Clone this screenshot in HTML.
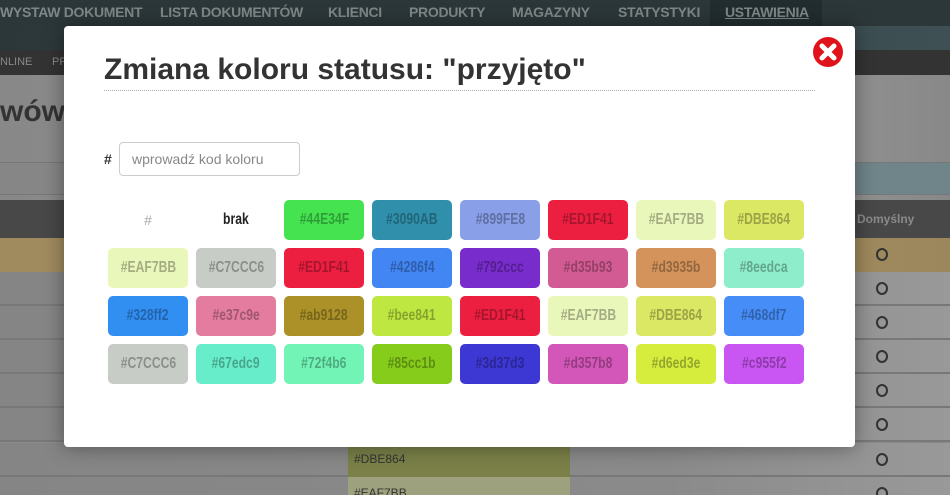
<!DOCTYPE html>
<html style="width:950px;height:495px;overflow:hidden"><head><meta charset="utf-8"><style>
*{margin:0;padding:0;box-sizing:border-box}
body{width:950px;height:495px;overflow:hidden;position:relative;background:#8a8a8a;font-family:"Liberation Sans",sans-serif}
.nav{position:absolute;left:0;top:0;width:950px;height:26px;background:#2c3739;color:#7f8889;font-weight:bold;font-size:14px;letter-spacing:-0.3px}
.nav span{position:absolute;top:4px}
.hdr{position:absolute;left:0;top:26px;width:950px;height:24px;background:linear-gradient(90deg,#2b3739,#3e5054)}
.sub{position:absolute;left:0;top:50px;width:950px;height:25px;background:#333;color:#888;font-size:11px}
.pg{position:absolute;left:0;top:75px;width:950px;height:125px;background:linear-gradient(90deg,#888,#979797 80%,#888)}
.filt{position:absolute;left:0;top:162px;width:950px;height:33px;background:#868686;border-top:1px solid #777;border-bottom:1px solid #777}
.th{position:absolute;left:0;top:200px;width:950px;height:38px;background:#484848;color:#8a8a8a;font-size:12px;font-weight:bold}
.tan{position:absolute;left:0;top:238px;width:950px;height:34px;background:linear-gradient(90deg,#a08b5f,#a48f62 70%,#9c875c)}
.row{position:absolute;left:0;width:950px;height:34px;background:linear-gradient(90deg,#858585,#8a8a8a 70%,#999);border-bottom:2px solid #787878}
.modal{position:absolute;left:64px;top:26px;width:791px;height:421px;background:#fff;border-radius:4px;box-shadow:0 0 20px rgba(0,0,0,.4)}
h1{position:absolute;left:40px;top:27px;font-size:30px;font-weight:bold;color:#333;white-space:nowrap}
.dl{position:absolute;left:40px;top:64px;width:711px;border-top:1px dotted #aaa}
.hash{position:absolute;left:40px;top:125px;font-weight:bold;font-size:14px;color:#333}
.inp{position:absolute;left:55px;top:116px;width:181px;height:34px;border:1px solid #ccc;border-radius:4px;font-size:14px;color:#888;padding:8px 12px}
.sw{position:absolute;width:80px;height:40px;border-radius:5px;color:rgba(0,0,0,.3);text-align:center;line-height:40px;overflow:hidden}
.sw b{display:inline-block;font-size:16px;transform:scaleX(.76);white-space:nowrap}
.x{position:absolute;left:749px;top:11px;width:30px;height:30px}
.c{position:absolute;left:876px;top:10px;width:12px;height:13px;border:2px solid #333;border-radius:50%}
</style></head><body>
<div class="nav"><span style="left:0">WYSTAW DOKUMENT</span><span style="left:160px">LISTA DOKUMENTÓW</span><span style="left:328px">KLIENCI</span><span style="left:409px">PRODUKTY</span><span style="left:512px">MAGAZYNY</span><span style="left:618px">STATYSTYKI</span><span style="left:710px;background:#222d2f;height:26px;top:0;padding:4px 15px 0;width:112px;text-decoration:underline">USTAWIENIA</span></div>
<div class="hdr"></div>
<div class="sub"><span style="position:absolute;left:0;top:6px">NLINE</span><span style="position:absolute;left:52px;top:6px">PR</span></div>
<div class="pg"><span style="position:absolute;left:0;top:20px;font-size:30px;font-weight:bold;color:#333">wów</span></div>
<div class="filt" style="background:#708589"></div>
<div class="filt" style="width:70px"></div>
<div class="th"><span style="position:absolute;left:857px;top:12px">Domyślny</span></div>
<div class="tan"><span class="c"></span></div>
<div class="row" style="top:272px"><span class="c"></span></div><div class="row" style="top:306px"><span class="c"></span></div><div class="row" style="top:340px"><span class="c"></span></div><div class="row" style="top:374px"><span class="c"></span></div><div class="row" style="top:408px"><span class="c"></span></div>
<div class="row" style="top:443px"><div style="position:absolute;left:348px;top:0;width:222px;height:34px;background:#7b8048;color:#333;font-size:12px;padding:9px 6px">#DBE864</div><span class="c"></span></div>
<div class="row" style="top:477px"><div style="position:absolute;left:348px;top:0;width:222px;height:34px;background:#9ea17e;color:#333;font-size:12px;padding:9px 6px">#EAF7BB</div><span class="c"></span></div>
<div class="modal">
<h1>Zmiana koloru statusu: "przyjęto"</h1>
<div class="dl"></div>
<svg class="x" viewBox="0 0 30 30"><circle cx="15" cy="15" r="15" fill="#e0121a"/><path d="M9 9L21 21M21 9L9 21" stroke="#fff" stroke-width="5" stroke-linecap="round"/></svg>
<div class="hash">#</div>
<div class="inp">wprowadź kod koloru</div>
<div class="sw" style="left:44px;top:174px;color:#aaa"><span style="font-size:14px">#</span></div>
<div class="sw" style="left:132px;top:174px;color:#222"><b>brak</b></div>
<div class="sw" style="left:220px;top:174px;background:#44E34F"><b>#44E34F</b></div>
<div class="sw" style="left:308px;top:174px;background:#3090AB"><b>#3090AB</b></div>
<div class="sw" style="left:396px;top:174px;background:#899FE8"><b>#899FE8</b></div>
<div class="sw" style="left:484px;top:174px;background:#ED1F41"><b>#ED1F41</b></div>
<div class="sw" style="left:572px;top:174px;background:#EAF7BB"><b>#EAF7BB</b></div>
<div class="sw" style="left:660px;top:174px;background:#DBE864"><b>#DBE864</b></div>
<div class="sw" style="left:44px;top:222px;background:#EAF7BB"><b>#EAF7BB</b></div>
<div class="sw" style="left:132px;top:222px;background:#C7CCC6"><b>#C7CCC6</b></div>
<div class="sw" style="left:220px;top:222px;background:#ED1F41"><b>#ED1F41</b></div>
<div class="sw" style="left:308px;top:222px;background:#4286f4"><b>#4286f4</b></div>
<div class="sw" style="left:396px;top:222px;background:#792ccc"><b>#792ccc</b></div>
<div class="sw" style="left:484px;top:222px;background:#d35b93"><b>#d35b93</b></div>
<div class="sw" style="left:572px;top:222px;background:#d3935b"><b>#d3935b</b></div>
<div class="sw" style="left:660px;top:222px;background:#8eedca"><b>#8eedca</b></div>
<div class="sw" style="left:44px;top:270px;background:#328ff2"><b>#328ff2</b></div>
<div class="sw" style="left:132px;top:270px;background:#e37c9e"><b>#e37c9e</b></div>
<div class="sw" style="left:220px;top:270px;background:#ab9128"><b>#ab9128</b></div>
<div class="sw" style="left:308px;top:270px;background:#bee841"><b>#bee841</b></div>
<div class="sw" style="left:396px;top:270px;background:#ED1F41"><b>#ED1F41</b></div>
<div class="sw" style="left:484px;top:270px;background:#EAF7BB"><b>#EAF7BB</b></div>
<div class="sw" style="left:572px;top:270px;background:#DBE864"><b>#DBE864</b></div>
<div class="sw" style="left:660px;top:270px;background:#468df7"><b>#468df7</b></div>
<div class="sw" style="left:44px;top:318px;background:#C7CCC6"><b>#C7CCC6</b></div>
<div class="sw" style="left:132px;top:318px;background:#67edc9"><b>#67edc9</b></div>
<div class="sw" style="left:220px;top:318px;background:#72f4b6"><b>#72f4b6</b></div>
<div class="sw" style="left:308px;top:318px;background:#85cc1b"><b>#85cc1b</b></div>
<div class="sw" style="left:396px;top:318px;background:#3d37d3"><b>#3d37d3</b></div>
<div class="sw" style="left:484px;top:318px;background:#d357b8"><b>#d357b8</b></div>
<div class="sw" style="left:572px;top:318px;background:#d6ed3e"><b>#d6ed3e</b></div>
<div class="sw" style="left:660px;top:318px;background:#c955f2"><b>#c955f2</b></div>
</div>
</body></html>
